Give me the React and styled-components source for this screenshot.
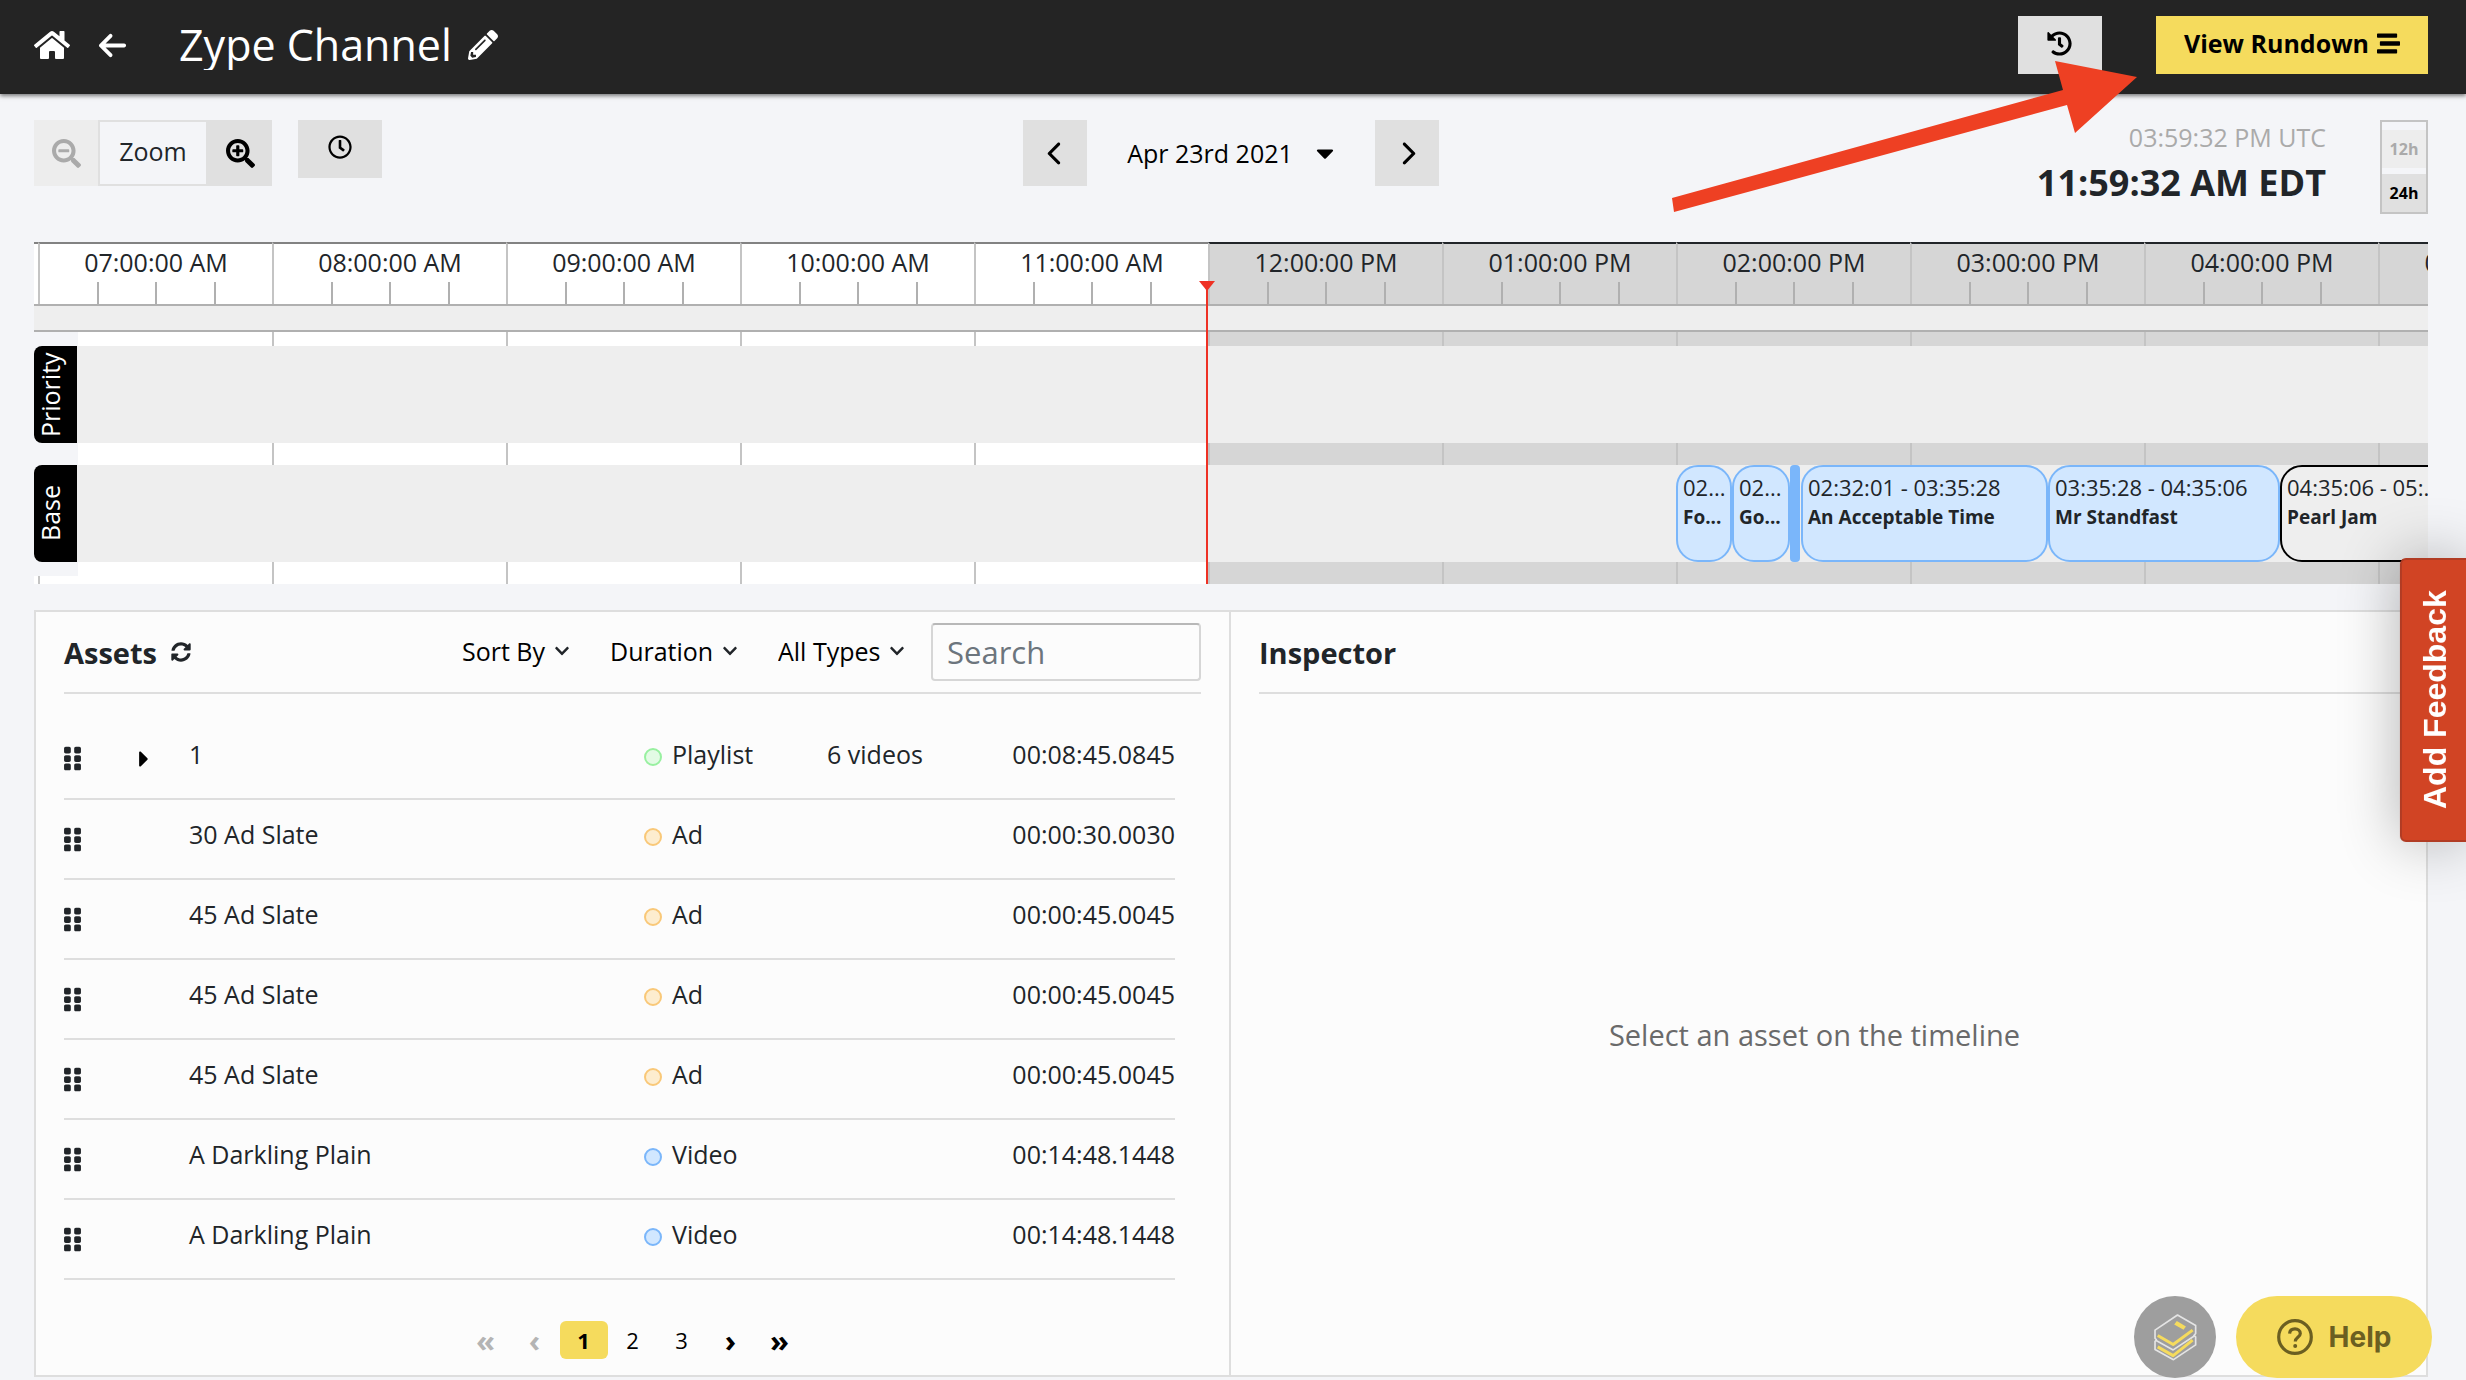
import styled, { createGlobalStyle, css } from "styled-components";
import {
  FaHome,
  FaPencilAlt,
  FaHistory,
  FaStream,
  FaSearchMinus,
  FaSearchPlus,
  FaRegClock,
  FaCaretDown,
  FaCaretRight,
  FaChevronDown,
  FaSyncAlt,
  FaGripVertical,
} from "react-icons/fa";
import { FaArrowLeft, FaChevronLeft, FaChevronRight } from "react-icons/fa6";

const HOURS = [
  "07:00:00 AM",
  "08:00:00 AM",
  "09:00:00 AM",
  "10:00:00 AM",
  "11:00:00 AM",
  "12:00:00 PM",
  "01:00:00 PM",
  "02:00:00 PM",
  "03:00:00 PM",
  "04:00:00 PM",
  "05:00:00 PM",
];
const FIRST_FUTURE_HOUR = 5;

const CLIPS = [
  { time: "02...", title: "Fo...", width: 56 },
  { time: "02...", title: "Go...", width: 58 },
  { width: 10 },
  { time: "02:32:01 - 03:35:28", title: "An Acceptable Time", width: 247 },
  { time: "03:35:28 - 04:35:06", title: "Mr Standfast", width: 232 },
  { time: "04:35:06 - 05:...", title: "Pearl Jam", width: 234, plain: true },
];

const ASSETS = [
  { name: "1", type: "Playlist", count: "6 videos", duration: "00:08:45.0845" },
  { name: "30 Ad Slate", type: "Ad", duration: "00:00:30.0030" },
  { name: "45 Ad Slate", type: "Ad", duration: "00:00:45.0045" },
  { name: "45 Ad Slate", type: "Ad", duration: "00:00:45.0045" },
  { name: "45 Ad Slate", type: "Ad", duration: "00:00:45.0045" },
  { name: "A Darkling Plain", type: "Video", duration: "00:14:48.1448" },
  { name: "A Darkling Plain", type: "Video", duration: "00:14:48.1448" },
];

const DOT_COLORS = {
  Playlist: { border: "#98f0a0", fill: "#e3fbe5" },
  Ad: { border: "#f9c878", fill: "#fdedcf" },
  Video: { border: "#7ab6fa", fill: "#d1e7ff" },
};

const FILTERS = ["Sort By", "Duration", "All Types"];

function Timeline() {
  return (
    <TimelineBox>
      <Ruler>
        {HOURS.map((hour, i) => (
          <Hour key={hour} $future={i >= FIRST_FUTURE_HOUR}>
            {hour}
            <Ticks>
              <i />
              <i />
              <i />
            </Ticks>
          </Hour>
        ))}
      </Ruler>
      <RulerBar />
      <Tracks>
        <Columns>
          {HOURS.map((hour, i) => (
            <Column key={hour} $future={i >= FIRST_FUTURE_HOUR} />
          ))}
        </Columns>
        <Lanes>
          <Lane>
            <LaneLabel>Priority</LaneLabel>
            <LaneBody />
          </Lane>
          <Lane>
            <LaneLabel>Base</LaneLabel>
            <LaneBody>
              {CLIPS.map((clip, i) =>
                clip.title ? (
                  <Clip key={i} $plain={clip.plain} style={{ width: clip.width }}>
                    <ClipTime>{clip.time}</ClipTime>
                    <ClipTitle>{clip.title}</ClipTitle>
                  </Clip>
                ) : (
                  <ClipSliver key={i} style={{ width: clip.width }} />
                )
              )}
            </LaneBody>
          </Lane>
        </Lanes>
      </Tracks>
      <NowLine />
    </TimelineBox>
  );
}

function AssetTable() {
  return (
    <Table>
      <colgroup>
        <col style={{ width: 76 }} />
        <col style={{ width: 49 }} />
        <col />
        <col style={{ width: 183 }} />
        <col style={{ width: 148 }} />
        <col style={{ width: 200 }} />
      </colgroup>
      <tbody>
        {ASSETS.map((asset, i) => (
          <tr key={i}>
            <IconCell>
              <FaGripVertical size={27} />
            </IconCell>
            <IconCell>
              {asset.count && (
                <ExpandButton aria-label="Expand playlist">
                  <FaCaretRight size={26} />
                </ExpandButton>
              )}
            </IconCell>
            <TextCell>{asset.name}</TextCell>
            <TextCell>
              <Kind>
                <Dot $type={asset.type} />
                {asset.type}
              </Kind>
            </TextCell>
            <TextCell>{asset.count}</TextCell>
            <TextCell $right>{asset.duration}</TextCell>
          </tr>
        ))}
      </tbody>
    </Table>
  );
}

function BooksIcon() {
  return (
    <svg width="43" height="47" viewBox="0 0 128 140" fill="none" strokeLinejoin="round">
      <path
        d="M70 3 124 34V58L119 64 124 68V92L58 136 3 106V82L7 77 3 72V48Z"
        stroke="#e4e4e4"
        strokeWidth="5"
      />
      <path d="M5 78 57 107 122 64" stroke="#e4e4e4" strokeWidth="5" />
      <path d="M11 64 57 91 115 48" stroke="#f5db5d" strokeWidth="9" />
      <path d="M11 98 57 124 115 78" stroke="#f5db5d" strokeWidth="9" />
      <path d="M68 21 95 37 88 47 60 31Z" fill="#f5db5d" />
    </svg>
  );
}

function App() {
  return (
    <>
      <GlobalStyle />
      <Header>
        <HeaderLink href="#home" aria-label="Home">
          <FaHome size={36} />
        </HeaderLink>
        <HeaderLink href="#back" aria-label="Back">
          <FaArrowLeft size={31} />
        </HeaderLink>
        <Title>Zype Channel</Title>
        <PlainButton aria-label="Rename channel">
          <FaPencilAlt size={30} />
        </PlainButton>
        <HeaderActions>
          <SquareButton aria-label="History">
            <FaHistory size={25} />
          </SquareButton>
          <RundownButton>
            View Rundown
            <FaStream size={23} />
          </RundownButton>
        </HeaderActions>
      </Header>

      <Main>
        <Toolbar>
          <ToolbarLeft>
            <ZoomGroup>
              <ToolButton disabled aria-label="Zoom out">
                <FaSearchMinus size={29} />
              </ToolButton>
              <ZoomLabel>Zoom</ZoomLabel>
              <ToolButton aria-label="Zoom in">
                <FaSearchPlus size={29} />
              </ToolButton>
            </ZoomGroup>
            <SquareButton aria-label="Go to current time">
              <FaRegClock size={24} />
            </SquareButton>
          </ToolbarLeft>
          <DateGroup>
            <ToolButton aria-label="Previous day">
              <FaChevronLeft size={25} />
            </ToolButton>
            <DateButton>
              Apr 23rd 2021
              <FaCaretDown size={28} />
            </DateButton>
            <ToolButton aria-label="Next day">
              <FaChevronRight size={25} />
            </ToolButton>
          </DateGroup>
          <ToolbarRight>
            <Clock>
              <UtcTime>03:59:32 PM UTC</UtcTime>
              <LocalTime>11:59:32 AM EDT</LocalTime>
            </Clock>
            <FormatToggle>
              <FormatButton disabled>12h</FormatButton>
              <FormatButton>24h</FormatButton>
            </FormatToggle>
          </ToolbarRight>
        </Toolbar>

        <Timeline />

        <Panels>
          <AssetsPane>
            <PaneHeader>
              <PaneTitle>Assets</PaneTitle>
              <PlainButton aria-label="Refresh assets">
                <FaSyncAlt size={20} />
              </PlainButton>
              <Filters>
                {FILTERS.map((filter) => (
                  <SelectBox key={filter}>
                    <select aria-label={filter}>
                      <option>{filter}</option>
                    </select>
                    <FaChevronDown size={16} />
                  </SelectBox>
                ))}
                <Search type="text" placeholder="Search" aria-label="Search" />
              </Filters>
            </PaneHeader>
            <AssetTable />
            <Pagination aria-label="Pages">
              <PageButton disabled $arrow>«</PageButton>
              <PageButton disabled $arrow>‹</PageButton>
              <PageButton $active>1</PageButton>
              <PageButton>2</PageButton>
              <PageButton>3</PageButton>
              <PageButton $arrow>›</PageButton>
              <PageButton $arrow>»</PageButton>
            </Pagination>
          </AssetsPane>
          <InspectorPane>
            <PaneHeader>
              <PaneTitle>Inspector</PaneTitle>
            </PaneHeader>
            <EmptyMessage>Select an asset on the timeline</EmptyMessage>
          </InspectorPane>
        </Panels>
      </Main>

      <Pointer width="468" height="156" viewBox="1672 60 468 156">
        <path d="M1672 198 2063 90 2055 61 2137 77 2075 133 2067 105 1674 212Z" fill="#ee4023" />
      </Pointer>
      <FeedbackTab>Add Feedback</FeedbackTab>
      <Floating>
        <BooksButton aria-label="Guides">
          <BooksIcon />
        </BooksButton>
        <HelpButton>
          <svg width="36" height="36" viewBox="0 0 36 36" fill="none" stroke="currentColor">
            <circle cx="18" cy="18" r="16.3" strokeWidth="3.2" />
            <path
              d="M12.6 14.6c.2-3 2.4-4.7 5.4-4.7s5.3 1.8 5.3 4.5c0 3.8-5 3.9-5 8"
              strokeWidth="3.2"
            />
            <circle cx="18.2" cy="27" r="2" fill="currentColor" stroke="none" />
          </svg>
          Help
        </HelpButton>
      </Floating>
    </>
  );
}

const GlobalStyle = createGlobalStyle`
  * {
    box-sizing: border-box;
  }

  body {
    margin: 0;
    background-color: #f4f5f8;
    color: #212529;
    font-family: "Open Sans", "Noto Sans", sans-serif;
    font-size: 25px;
    line-height: 40px;
    overflow-x: hidden;
  }

  button, input, select {
    font: inherit;
    color: #000;
  }

  button {
    border: none;
    padding: 0;
    cursor: pointer;
  }

  svg {
    display: block;
    flex: none;
  }
`;

const Header = styled.header`
  display: flex;
  align-items: center;
  height: 94px;
  padding: 0 38px 4px 34px;
  background-color: #242424;
  color: #fff;
  box-shadow: 0 2px 4px rgba(0, 0, 0, 0.5);
`;

const HeaderLink = styled.a`
  display: flex;
  justify-content: center;
  width: 36px;
  margin-right: 24px;
  color: inherit;
`;

const Title = styled.h1`
  margin: 0 16px 0 25px;
  font-size: 43px;
  font-weight: normal;
  line-height: 50px;
  overflow: hidden;
`;

const PlainButton = styled.button`
  background: none;
  color: inherit;
`;

const ExpandButton = styled(PlainButton)`
  display: flex;
  margin-left: -4px;
  color: #000;
`;

const HeaderActions = styled.div`
  display: flex;
  gap: 54px;
  margin-left: auto;
`;

const SquareButton = styled.button`
  display: flex;
  align-items: center;
  justify-content: center;
  width: 84px;
  height: 58px;
  padding-bottom: 4px;
  background-color: #e0e0e0;
`;

const RundownButton = styled.button`
  display: flex;
  align-items: center;
  gap: 8px;
  height: 58px;
  padding: 0 28px 4px;
  background-color: #f5db5d;
  font-weight: bold;
`;

const Main = styled.main`
  padding: 26px 38px 2px 34px;
`;

const Toolbar = styled.div`
  display: grid;
  grid-template-columns: 1fr auto 1fr;
  align-items: start;
  height: 122px;
`;

const ToolbarLeft = styled.div`
  display: flex;
  align-items: flex-start;
  gap: 26px;
`;

const ZoomGroup = styled.div`
  display: flex;
`;

const ToolButton = styled.button`
  display: flex;
  align-items: center;
  justify-content: center;
  width: 64px;
  height: 66px;
  background-color: #e0e0e0;

  &:disabled {
    background-color: #ededed;
    color: #aaa;
  }
`;

const ZoomLabel = styled.div`
  width: 110px;
  height: 66px;
  border: 2px solid #e0e0e0;
  line-height: 58px;
  text-align: center;
`;

const DateGroup = styled.div`
  display: flex;
`;

const DateButton = styled.button`
  display: flex;
  align-items: center;
  justify-content: center;
  gap: 18px;
  width: 288px;
  padding-left: 4px;
  background: none;
`;

const ToolbarRight = styled.div`
  display: flex;
  justify-content: flex-end;
  gap: 54px;
`;

const Clock = styled.div`
  text-align: right;
`;

const UtcTime = styled.div`
  color: #aaa;
  line-height: 34px;
`;

const LocalTime = styled.div`
  font-size: 36px;
  font-weight: bold;
  line-height: 58px;
`;

const FormatToggle = styled.div`
  display: flex;
  flex-direction: column;
  gap: 6px;
  width: 48px;
  height: 94px;
  padding-top: 8px;
  border: 2px solid #c4c4c4;
`;

const FormatButton = styled.button`
  height: 38px;
  background-color: #e0e0e0;
  font-size: 16px;
  font-weight: bold;
  line-height: 34px;

  &:disabled {
    background-color: #ededed;
    color: #aaa;
  }
`;

const TimelineBox = styled.section`
  position: relative;
  overflow: hidden;
`;

const Ruler = styled.div`
  display: flex;
  padding-left: 4px;
  background: linear-gradient(#828282 2px, #fff 2px);
`;

const Hour = styled.div`
  display: flex;
  flex-direction: column;
  justify-content: space-between;
  flex: none;
  width: 234px;
  height: 62px;
  border-top: 2px solid ${({ $future }) => ($future ? "#212529" : "#828282")};
  border-left: 2px solid #c4c4c4;
  background-color: ${({ $future }) => ($future ? "#d6d6d6" : "#fff")};
  line-height: 36px;
  text-align: center;
`;

const Ticks = styled.div`
  display: flex;
  justify-content: space-evenly;
  height: 22px;

  i {
    width: 2px;
    background-color: #b0b0b0;
  }
`;

const RulerBar = styled.div`
  height: 28px;
  border: solid #b0b0b0;
  border-width: 2px 0;
  background-color: #eee;
`;

/* hour columns and lanes share one grid cell */
const Tracks = styled.div`
  display: grid;
  grid-template-columns: 100%;
  background-color: #fff;

  > * {
    grid-area: 1 / 1;
  }
`;

const Columns = styled.div`
  display: flex;
  padding-left: 4px;
  overflow: hidden;
`;

const Column = styled.div`
  flex: none;
  width: 234px;
  border-left: 2px solid #c4c4c4;
  background-color: ${({ $future }) => ($future ? "#d6d6d6" : "#fff")};
`;

const Lanes = styled.div`
  display: flex;
  flex-direction: column;
  gap: 22px;
  margin-bottom: 8px;
  padding: 14px 0;
  background: linear-gradient(#f4f5f8, #f4f5f8) 0 0 / 44px 100% no-repeat;
`;

const Lane = styled.div`
  display: flex;
  height: 97px;
`;

const LaneLabel = styled.div`
  flex: none;
  width: 43px;
  padding-left: 10px;
  border-radius: 0 8px 8px 0;
  background-color: #000;
  color: #fff;
  font-weight: 500;
  line-height: 33px;
  text-align: center;
  writing-mode: vertical-rl;
  transform: rotate(180deg);
`;

const LaneBody = styled.div`
  display: flex;
  flex: 1;
  min-width: 0;
  padding-left: 1599px;
  background-color: #eee;
  overflow: hidden;
`;

const Clip = styled.div`
  flex: none;
  padding: 5px;
  border: 2px solid #7ab6fa;
  border-radius: 22px;
  background-color: #d1e7ff;
  line-height: 30px;

  ${({ $plain }) =>
    $plain &&
    css`
      border-color: #000;
      background-color: #eee;
    `}
`;

const ClipSliver = styled.div`
  flex: none;
  margin-right: 1px;
  border-radius: 4px;
  background-color: #7ab6fa;
`;

const ClipTime = styled.div`
  font-size: 22px;
  white-space: nowrap;
`;

const ClipTitle = styled(ClipTime)`
  font-size: 19px;
  font-weight: bold;
`;

const NowLine = styled.div`
  position: absolute;
  top: 39px;
  bottom: 0;
  left: 1172px;
  width: 2px;
  background-color: #ee3124;

  &::before {
    content: "";
    position: absolute;
    left: -7px;
    border: 8px solid transparent;
    border-top: 10px solid #ee3124;
    border-bottom: none;
  }
`;

const Panels = styled.div`
  display: grid;
  grid-template-columns: 1fr 1fr;
  margin-top: 26px;
  border: 2px solid #dedede;
  background-color: #fcfcfc;
`;

const AssetsPane = styled.section`
  padding: 0 28px 16px;
  border-right: 2px solid #dedede;
`;

const InspectorPane = styled.section`
  display: flex;
  flex-direction: column;
  padding-left: 28px;
`;

const PaneHeader = styled.div`
  display: flex;
  align-items: center;
  height: 82px;
  border-bottom: 2px solid #dedede;
`;

const PaneTitle = styled.h2`
  margin: 2px 14px 0 0;
  font-size: 29px;
`;

const Filters = styled.div`
  display: flex;
  align-items: center;
  gap: 40px;
  margin-left: auto;
`;

const SelectBox = styled.label`
  display: flex;
  align-items: center;
  gap: 8px;
  padding-bottom: 2px;

  select {
    appearance: none;
    padding: 0;
    border: none;
    background: none;
  }
`;

const Search = styled.input`
  width: 270px;
  height: 58px;
  margin-left: -14px;
  padding: 0 14px;
  border: 2px solid #d6d6d6;
  border-top-color: #b8b8b8;
  border-radius: 4px;
  background-color: #fcfcfc;
  font-size: 31px;

  &::placeholder {
    color: #6c757d;
    opacity: 1;
  }
`;

const Table = styled.table`
  width: calc(100% - 26px);
  margin-top: 25px;
  border-collapse: collapse;
  table-layout: fixed;

  tr {
    height: 80px;
    border-bottom: 2px solid #dedede;
  }

  td {
    padding: 0;
  }
`;

const IconCell = styled.td`
  svg {
    margin-left: -5px;
  }
`;

const TextCell = styled.td`
  && {
    padding-bottom: 10px;
  }
  text-align: ${({ $right }) => ($right ? "right" : "left")};
`;

const Kind = styled.span`
  display: flex;
  align-items: center;
  gap: 10px;
`;

const Dot = styled.span`
  width: 18px;
  height: 18px;
  margin-top: 6px;
  border: 2px solid ${({ $type }) => DOT_COLORS[$type].border};
  border-radius: 50%;
  background-color: ${({ $type }) => DOT_COLORS[$type].fill};
`;

const Pagination = styled.nav`
  display: flex;
  justify-content: center;
  gap: 1px;
  margin-top: 41px;
`;

const PageButton = styled.button`
  width: 48px;
  height: 38px;
  border-radius: 6px;
  background: ${({ $active }) => ($active ? "#f5db5d" : "none")};
  font-size: ${({ $arrow }) => ($arrow ? "31px" : "22px")};
  font-weight: ${({ $active, $arrow }) => ($active || $arrow ? "bold" : "normal")};
  line-height: ${({ $arrow }) => ($arrow ? "32px" : "36px")};

  &:disabled {
    color: #b4b4b4;
  }
`;

const EmptyMessage = styled.p`
  display: flex;
  flex: 1;
  align-items: center;
  justify-content: center;
  margin: 0;
  padding-right: 56px;
  color: #6a6a6a;
  font-size: 29px;
`;

const Pointer = styled.svg`
  position: absolute;
  top: 60px;
  right: 326px;
`;

const FeedbackTab = styled.button`
  position: fixed;
  top: 558px;
  right: 0;
  width: 66px;
  height: 284px;
  padding-right: 2px;
  border: 2px solid #b13c24;
  border-left: none;
  border-radius: 0 6px 6px 0;
  background-color: #d14424;
  box-shadow: 0 0 60px rgba(0, 0, 0, 0.3);
  color: #fff;
  font-family: "Liberation Sans", Arial, sans-serif;
  font-size: 32px;
  font-weight: bold;
  writing-mode: vertical-rl;
  transform: rotate(180deg);
`;

const Floating = styled.div`
  position: fixed;
  right: 34px;
  bottom: 2px;
  display: flex;
  gap: 20px;
`;

const BooksButton = styled.button`
  display: flex;
  align-items: center;
  justify-content: center;
  width: 82px;
  height: 82px;
  border-radius: 50%;
  background-color: #9e9e9e;
`;

const HelpButton = styled.button`
  display: flex;
  align-items: center;
  justify-content: center;
  gap: 16px;
  width: 196px;
  height: 82px;
  border-radius: 41px;
  background-color: #f5db5d;
  color: #6b5f21;
  font-family: Inter, "Liberation Sans", sans-serif;
  font-size: 28px;
  font-weight: bold;
`;

export default App;
